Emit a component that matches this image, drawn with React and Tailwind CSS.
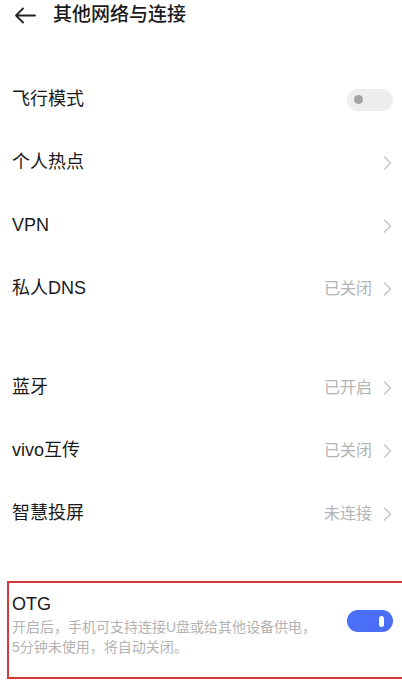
import React from 'react';

const FONT = { fontFamily: '"Liberation Sans", "Noto Sans CJK SC", sans-serif' };

const Chevron = () => (
  <svg width="9" height="14" viewBox="0 0 9 14" fill="none" className="shrink-0">
    <path d="M1.5 1l6 6-6 6" stroke="#c4c4c4" strokeWidth="1.4" strokeLinecap="round" strokeLinejoin="round" />
  </svg>
);

const Row = ({ title, value, toggle }) => (
  <div className="h-[63px] flex items-center justify-between pl-3 pr-[10px]">
    <span className="text-[18px] text-[#1a1a1a]">{title}</span>
    {toggle ? (
      <div className="w-[46px] h-[22px] rounded-full bg-[#ededed] flex items-center pl-[7px] mr-[-1px]">
        <div className="w-[9px] h-[9px] rounded-full bg-[#a3a3a3]" />
      </div>
    ) : (
      <div className="flex items-center gap-[11px]">
        {value && <span className="text-[16px] text-[#b4b4b4]">{value}</span>}
        <Chevron />
      </div>
    )}
  </div>
);

export default function App() {
  return (
    <div className="w-[402px] h-[683px] bg-white overflow-hidden" style={FONT}>
      <div className="h-[30px] flex items-center pl-[14px] gap-[17px]">
        <svg width="22" height="17" viewBox="0 0 22 17" fill="none">
          <path d="M21 8.5H2M9 1.5L2 8.5l7 7" stroke="#222" strokeWidth="1.8" strokeLinecap="round" strokeLinejoin="round" />
        </svg>
        <span className="text-[19px] font-medium text-[#1a1a1a]">其他网络与连接</span>
      </div>

      <div className="mt-[38px]">
        <Row title="飞行模式" toggle />
        <Row title="个人热点" />
        <Row title="VPN" />
        <Row title="私人DNS" value="已关闭" />
      </div>

      <div className="mt-[36px]">
        <Row title="蓝牙" value="已开启" />
        <Row title="vivo互传" value="已关闭" />
        <Row title="智慧投屏" value="未连接" />
      </div>

      <div className="mt-[36px] ml-[7px] w-[400px] h-[98px] border-2 border-[#d9363b] pl-[3px] pt-[9px] flex items-start justify-between">
        <div>
          <div className="text-[18px] leading-[24px] text-[#1a1a1a]">OTG</div>
          <div className="text-[14px] leading-[20px] text-[#b3b3b3] mt-[1px]">
            开启后，手机可支持连接U盘或给其他设备供电，
            <br />
            5分钟未使用，将自动关闭。
          </div>
        </div>
        <div className="mt-[18px] mr-[12px] w-[46px] h-[22px] rounded-full bg-[#4a6ef5] flex items-center justify-end pr-[9px]">
          <div className="w-[5px] h-[11px] rounded-full bg-white" />
        </div>
      </div>
    </div>
  );
}
